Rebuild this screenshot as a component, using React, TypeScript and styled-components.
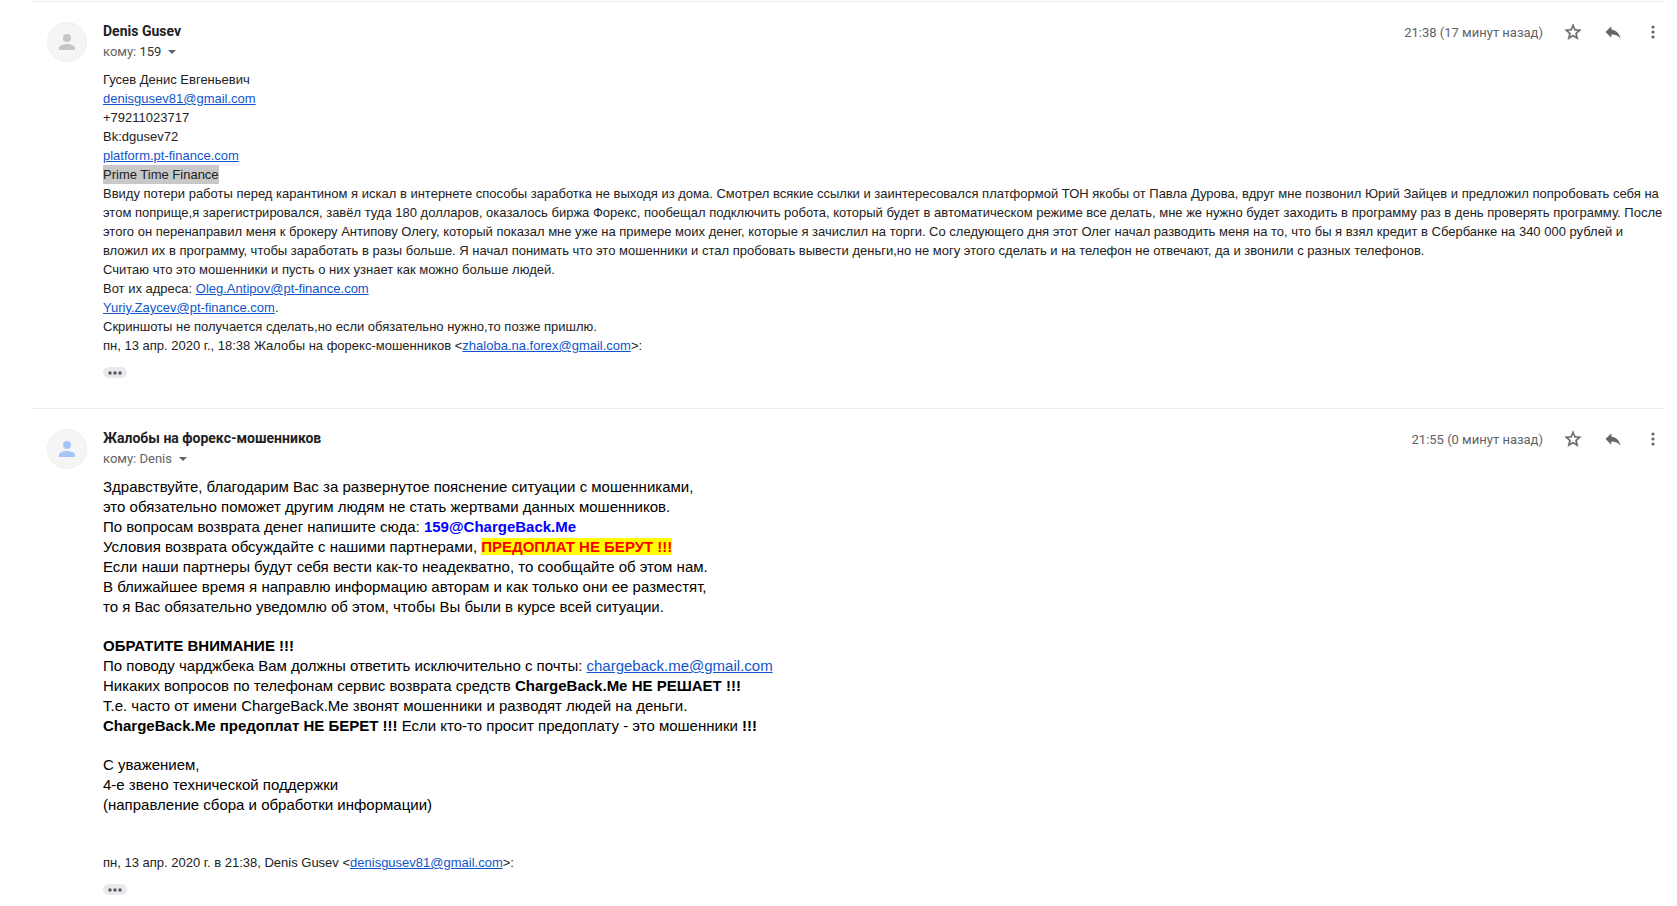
import React from "react";
import styled, { createGlobalStyle } from "styled-components";

const GlobalStyle = createGlobalStyle`
  body {
    margin: 0;
    background: #fff;
    color: #222;
    font-family: "Liberation Sans", Arial, sans-serif;
  }
`;

const Thread = styled.main`
  padding: 1px 13px 0 31px;
`;

const Message = styled.article`
  display: flex;
  align-items: flex-start;
  gap: 16px;
  padding: 20px 0 30px 16px;
  border-top: 1px solid #ececec;
`;

const Avatar = styled.div<{ $color: string }>`
  display: flex;
  flex: none;
  align-items: center;
  justify-content: center;
  box-sizing: border-box;
  width: 40px;
  height: 40px;
  border: 1px solid #efefef;
  border-radius: 50%;
  background: #f5f5f5;
  color: ${(p) => p.$color};
`;

const Main = styled.div`
  flex: 1;
  min-width: 0;
`;

const Header = styled.header`
  display: flex;
  align-items: flex-start;
  justify-content: space-between;
  padding-right: 1px;
  font-family: Roboto, "Liberation Sans", sans-serif;
`;

const Sender = styled.h3`
  margin: 0 0 2px;
  color: #202124;
  font-size: 14px;
  font-weight: 700;
  line-height: 18px;
`;

const Recipient = styled.button`
  display: flex;
  align-items: center;
  gap: 7px;
  padding: 0;
  border: 0;
  background: none;
  color: #5f6368;
  font: 13px/20px Roboto, "Liberation Sans", sans-serif;
`;

const RecipientName = styled.span<{ $dark?: boolean }>`
  color: ${(p) => (p.$dark ? "#333" : "inherit")};
`;

const Actions = styled.div`
  display: flex;
  align-items: center;
  gap: 20px;
  height: 20px;
`;

const Time = styled.time`
  color: #5f6368;
  font-size: 13px;
`;

const IconButton = styled.button`
  display: flex;
  padding: 0;
  border: 0;
  background: none;
  color: #666;
`;

const Content = styled.div`
  margin-top: 8px;
  margin-right: -1px;
  font-size: 13px;
  line-height: 19px;
`;

const Letter = styled.div`
  color: #000;
  font-size: 15px;
  line-height: 20px;
`;

const Paragraph = styled.p`
  margin: 0 0 19px;
`;

const Quote = styled.p`
  margin: 0;
  padding-top: 19px;
`;

const Link = styled.a`
  color: #15c;
  text-decoration: underline;
`;

const Selection = styled.span`
  display: inline-block;
  background: #c8c8c8;
`;

const Contact = styled.b`
  color: #00f;
`;

const Warning = styled.mark`
  background: #ff0;
  color: #f00;
  font-weight: 700;
`;

const MoreButton = styled.button`
  display: flex;
  align-items: center;
  justify-content: center;
  width: 24px;
  height: 11px;
  margin-top: 12px;
  padding: 0;
  border: 0;
  border-radius: 6px;
  background: #e8eaed;
  color: #555;
`;

const Person = () => (
  <svg width="24" height="24" viewBox="0 0 24 24" fill="currentColor" aria-hidden="true">
    <path d="M12 12a4 4 0 1 0 0-8 4 4 0 0 0 0 8zm0 2c-2.67 0-8 1.34-8 4v2h16v-2c0-2.66-5.33-4-8-4z" />
  </svg>
);

const Star = () => (
  <svg width="20" height="20" viewBox="0 0 24 24" fill="currentColor" stroke="currentColor" strokeWidth="0.4" aria-hidden="true">
    <path d="M22 9.24l-7.19-.62L12 2 9.19 8.63 2 9.24l5.46 4.73L5.82 21 12 17.27 18.18 21l-1.63-7.03L22 9.24zM12 15.4l-3.76 2.27 1-4.28-3.32-2.88 4.38-.38L12 6.1l1.71 4.04 4.38.38-3.32 2.88 1 4.28L12 15.4z" />
  </svg>
);

const Reply = () => (
  <svg width="20" height="20" viewBox="0 0 24 24" fill="currentColor" aria-hidden="true">
    <path d="M10 9V5l-7 7 7 7v-4.1c5 0 8.5 1.6 11 5.1-1-5-4-10-11-11z" />
  </svg>
);

const Dots = () => (
  <svg width="20" height="20" viewBox="0 0 20 20" fill="currentColor" aria-hidden="true">
    <circle cx="10" cy="5" r="1.6" />
    <circle cx="10" cy="10" r="1.6" />
    <circle cx="10" cy="15" r="1.6" />
  </svg>
);

const Caret = () => (
  <svg width="8" height="4" viewBox="0 0 8 4" fill="currentColor" aria-hidden="true">
    <path d="M0 0h8L4 4z" />
  </svg>
);

const Mail = ({ address }: { address: string }) => <Link href={`mailto:${address}`}>{address}</Link>;

const ShowTrimmed = () => (
  <MoreButton type="button" aria-label="Показать сокращенный текст">
    <svg width="14" height="4" viewBox="0 0 14 4" fill="currentColor" aria-hidden="true">
      <circle cx="2" cy="2" r="1.7" />
      <circle cx="7" cy="2" r="1.7" />
      <circle cx="12" cy="2" r="1.7" />
    </svg>
  </MoreButton>
);

type EmailProps = {
  sender: string;
  recipient: string;
  darkRecipient?: boolean;
  time: string;
  avatarColor: string;
  children: React.ReactNode;
};

const Email = ({ sender, recipient, darkRecipient, time, avatarColor, children }: EmailProps) => (
  <Message>
    <Avatar $color={avatarColor}>
      <Person />
    </Avatar>
    <Main>
      <Header>
        <div>
          <Sender>{sender}</Sender>
          <Recipient type="button">
            <span>
              кому: <RecipientName $dark={darkRecipient}>{recipient}</RecipientName>
            </span>
            <Caret />
          </Recipient>
        </div>
        <Actions>
          <Time>{time}</Time>
          <IconButton type="button" aria-label="Пометить">
            <Star />
          </IconButton>
          <IconButton type="button" aria-label="Ответить">
            <Reply />
          </IconButton>
          <IconButton type="button" aria-label="Ещё">
            <Dots />
          </IconButton>
        </Actions>
      </Header>
      <Content>{children}</Content>
      <ShowTrimmed />
    </Main>
  </Message>
);

export default function App() {
  return (
    <>
      <GlobalStyle />
      <Thread>
        <Email sender="Denis Gusev" recipient="159" darkRecipient time="21:38 (17 минут назад)" avatarColor="#c6c6c6">
          <div>Гусев Денис Евгеньевич</div>
          <div><Mail address="denisgusev81@gmail.com" /></div>
          <div>+79211023717</div>
          <div>Bk:dgusev72</div>
          <div><Link href="http://platform.pt-finance.com">platform.pt-finance.com</Link></div>
          <Selection>Prime Time Finance</Selection>
          <div>
            Ввиду потери работы перед карантином я искал в интернете способы заработка не выходя из дома. Смотрел всякие
            ссылки и заинтересовался платформой ТОН якобы от Павла Дурова, вдруг мне позвонил Юрий Зайцев и предложил
            попробовать себя на этом поприще,я зарегистрировался, завёл туда 180 долларов, оказалось биржа Форекс,
            пообещал подключить робота, который будет в автоматическом режиме все делать, мне же нужно будет заходить в
            программу раз в день проверять программу. После этого он перенаправил меня к брокеру Антипову Олегу, который
            показал мне уже на примере моих денег, которые я зачислил на торги. Со следующего дня этот Олег начал
            разводить меня на то, что бы я взял кредит в Сбербанке на 340 000 рублей и вложил их в программу, чтобы
            заработать в разы больше. Я начал понимать что это мошенники и стал пробовать вывести деньги,но не могу
            этого сделать и на телефон не отвечают, да и звонили с разных телефонов.
          </div>
          <div>Считаю что это мошенники и пусть о них узнает как можно больше людей.</div>
          <div>Вот их адреса: <Mail address="Oleg.Antipov@pt-finance.com" /></div>
          <div><Mail address="Yuriy.Zaycev@pt-finance.com" />.</div>
          <div>Скриншоты не получается сделать,но если обязательно нужно,то позже пришлю.</div>
          <div>
            пн, 13 апр. 2020 г., 18:38 Жалобы на форекс-мошенников &lt;<Mail address="zhaloba.na.forex@gmail.com" />&gt;:
          </div>
        </Email>
        <Email sender="Жалобы на форекс-мошенников" recipient="Denis" time="21:55 (0 минут назад)" avatarColor="#a5c4f7">
          <Letter>
            <Paragraph>
              Здравствуйте, благодарим Вас за развернутое пояснение ситуации с мошенниками,
              <br />
              это обязательно поможет другим людям не стать жертвами данных мошенников.
              <br />
              По вопросам возврата денег напишите сюда: <Contact>159@ChargeBack.Me</Contact>
              <br />
              Условия возврата обсуждайте с нашими партнерами, <Warning>ПРЕДОПЛАТ НЕ БЕРУТ !!!</Warning>
              <br />
              Если наши партнеры будут себя вести как-то неадекватно, то сообщайте об этом нам.
              <br />
              В ближайшее время я направлю информацию авторам и как только они ее разместят,
              <br />
              то я Вас обязательно уведомлю об этом, чтобы Вы были в курсе всей ситуации.
            </Paragraph>
            <Paragraph>
              <b>ОБРАТИТЕ ВНИМАНИЕ !!!</b>
              <br />
              По поводу чарджбека Вам должны ответить исключительно с почты: <Mail address="chargeback.me@gmail.com" />
              <br />
              Никаких вопросов по телефонам сервис возврата средств <b>ChargeBack.Me НЕ РЕШАЕТ !!!</b>
              <br />
              Т.е. часто от имени ChargeBack.Me звонят мошенники и разводят людей на деньги.
              <br />
              <b>ChargeBack.Me предоплат НЕ БЕРЕТ !!!</b> Если кто-то просит предоплату - это мошенники <b>!!!</b>
            </Paragraph>
            <Paragraph>
              С уважением,
              <br />
              4-е звено технической поддержки
              <br />
              (направление сбора и обработки информации)
            </Paragraph>
          </Letter>
          <Quote>
            пн, 13 апр. 2020 г. в 21:38, Denis Gusev &lt;<Mail address="denisgusev81@gmail.com" />&gt;:
          </Quote>
        </Email>
      </Thread>
    </>
  );
}
